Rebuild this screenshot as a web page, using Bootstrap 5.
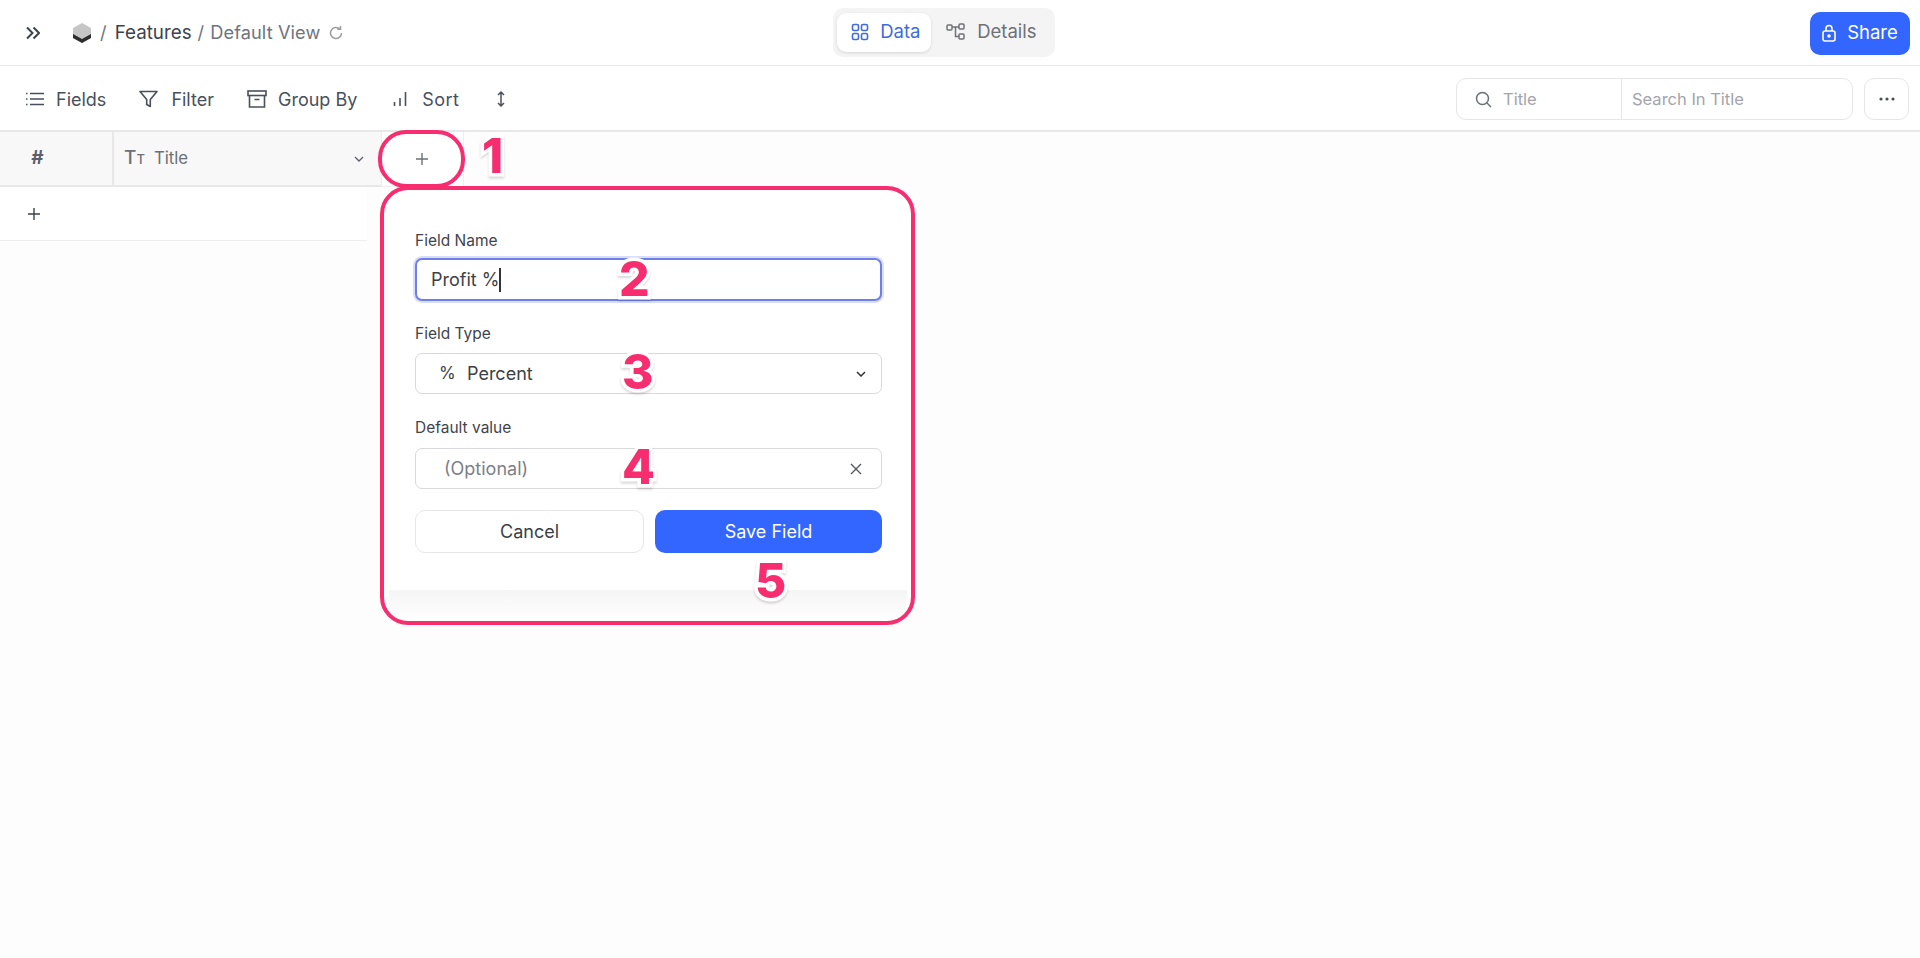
<!DOCTYPE html>
<html lang="en"><head><meta charset="utf-8"><title>Features</title>
<link href="https://cdn.jsdelivr.net/npm/bootstrap@5.3.0/dist/css/bootstrap.min.css" rel="stylesheet">
<style>
html,body{height:100%}
body{font-family:Inter,"Liberation Sans",sans-serif;background:#fdfdfd;color:#4a4f5c;overflow:hidden;height:958px}
svg{display:block;flex:none}
.topbar{height:66px;background:#fff;border-bottom:1px solid #e8e8e8;padding:1px 10px 0 26px}
.crumbs{font-size:18.2px;margin-left:32px}
.crumb-dark{color:#3d424d;font-weight:400;font-size:18.8px;margin:0 6px 0 8px}
.crumb-muted{color:#6e7480;letter-spacing:.1px}
.crumb-tail{margin-left:6px}
.switcher{background:#f4f4f5;border-radius:10px;padding:5px 4px;gap:2px;height:49px;margin-bottom:2px}
.sw-item{height:39px;display:flex;align-items:center;gap:11px;font-size:18.5px;color:#6f7177;border-radius:9px;width:94px;padding-left:14px}
.sw-on{background:#fff;color:#3f6bdc;box-shadow:0 1px 3px rgba(0,0,0,.12)}
.sw-off{width:118px;padding-left:13px}
.center-slot{flex:1;margin-right:266px}
.share{background:#3366ff;color:#fff;font-size:18.5px;height:43px;width:100px;border-radius:10px;gap:11px;border:0}
.toolbar{height:66px;background:#fff;border-bottom:2px solid #e8e8e8;padding:2px 11px 0 26px}
.tool{font-size:18px;color:#4a4f5c;font-weight:400}
.tools{gap:33px}
.tg12{gap:12px}.tg11{gap:11px}.tg13{gap:13px}.tg15{gap:15px;margin-left:3px;letter-spacing:.4px}
.searchbox{height:42px;width:397px;border:1px solid #e6e6e6;border-radius:10px;background:#fff;font-size:16.5px}
.search-l{width:165px;height:100%;border-right:1px solid #e6e6e6;padding-left:18px;gap:11px;color:#a2a5ab}
.search-r{padding-left:10px;color:#a2a5ab}
.morebtn{width:45px;height:42px;border:1px solid #e6e6e6;border-radius:10px;background:#fff}
.headrow{display:flex;height:55px}
.hcell{background:#f8f8f8;height:100%;display:flex;align-items:center;border-bottom:2px solid #e8e8e8}
.h-num{width:114px;border-right:2px solid #e8e8e8;justify-content:center;padding-right:37px;font-size:19px;font-weight:700;color:#5b5e6b}
.h-title{width:267px;padding:0 17px 0 10px;font-size:16.8px;color:#6c7078;gap:9px}
.tt-big{font-size:19px;font-weight:500}
.tt-small{font-size:13px}
.h-add{width:83px;justify-content:center;background:#fff;border-right:1px solid #eee;border-left:1px solid #eee;border-bottom:1px solid #eee;padding-right:2px}
.addrow{height:54px;width:367px;background:#fff;border-bottom:1px solid #eee;padding-left:27px}
.stage{position:relative;flex:1}
.popover-card{position:absolute;left:381px;top:0;width:534px;height:438px;background:#fff;border-radius:26px;padding:44px 33px 0 34px;overflow:hidden}
.flabel{font-size:15.5px;line-height:20px;color:#3f434c;display:block;font-weight:400}
.finput{border:1px solid #d9d9dc;border-radius:7px;font-size:18px;color:#3c3f46;padding:0 15px;background:#fff;display:flex;align-items:center}
.f-focus{height:43px;margin-top:7px;padding:0 14px;border:2px solid #6f7fe8;box-shadow:0 0 0 2px #d9deff}
.f-type{height:41px;margin-top:9px}
.f-opt{height:41px;margin-top:10px;color:#7d8088;padding-left:28px}
.lab2{margin-top:23px}.lab3{margin-top:24px}
.caret{width:2px;height:24px;background:#333;display:inline-block}
.pct{width:28px;margin-left:8px;font-size:17px}
.btnrow{gap:11px;margin-top:21px}
.pb{height:43px;flex:1;border-radius:10px;font-size:18px;font-weight:400}
.pb-c{background:#fff;border:1px solid #e6e6e6;color:#3c3f46}
.pb-s{background:#3366ff;border:0;color:#fff}
.cardfoot{position:absolute;left:8px;right:8px;bottom:4px;height:31px;background:linear-gradient(#f5f5f5,#fff)}
.ring{position:absolute;border:4px solid #f72d70;pointer-events:none}
.ring-a{left:378px;top:-57px;width:87px;height:58px;border-radius:28px}
.ring-b{left:380px;top:-1px;width:535px;height:439px;border-radius:28px}
.tagnum{position:absolute;color:#f72d70;font-family:Inter,"Liberation Sans",sans-serif;font-weight:800;font-size:48px;line-height:1;-webkit-text-stroke:7px #fff;paint-order:stroke fill;filter:drop-shadow(0 2px 1px rgba(0,0,0,.15))}
</style></head>
<body class="d-flex flex-column">
<div class="topbar d-flex align-items-center">
  <svg width="14" height="14" viewBox="0 0 14 14" fill="none" stroke="#3d424d" stroke-width="2"><path d="M1 1.5l5.5 5.5L1 12.5M7.5 1.5L13 7l-5.5 5.5"/></svg>
  <div class="crumbs d-flex align-items-center">
    <svg width="20" height="22" viewBox="0 0 20 22"><path d="M10 1l9 5v10l-9 5-9-5V6z" fill="#c6c6c6"/><path d="M1 12l9 5 9-5v4l-9 5-9-5z" fill="#2e2e2e"/></svg>
    <span class="crumb-muted ms-2">/</span><span class="crumb-dark">Features</span><span class="crumb-muted">/</span><span class="crumb-muted crumb-tail">Default View</span>
    <svg class="ms-2" width="16" height="16" viewBox="0 0 16 16" fill="none" stroke="#9a9da3" stroke-width="1.5"><path d="M13.5 8a5.5 5.5 0 1 1-1.7-4M12.5 1v3.2H9.3"/></svg>
  </div>
  <div class="center-slot d-flex justify-content-center">
    <div class="switcher d-flex">
      <div class="sw-item sw-on"><svg width="18" height="18" viewBox="0 0 18 18" fill="none" stroke="#3f6bdc" stroke-width="1.6"><rect x="1.5" y="1.5" width="6" height="6" rx="1.5"/><rect x="10.5" y="1.5" width="6" height="6" rx="1.5"/><rect x="1.5" y="10.5" width="6" height="6" rx="1.5"/><rect x="10.5" y="10.5" width="6" height="6" rx="1.5"/></svg>Data</div>
      <div class="sw-item sw-off"><svg width="20" height="18" viewBox="0 0 20 18" fill="none" stroke="#6f7177" stroke-width="1.5"><rect x="1" y="2" width="5" height="5" rx="1"/><rect x="13" y="1" width="5" height="5" rx="1"/><rect x="13" y="11" width="5" height="5" rx="1"/><path d="M6 4h7M9.5 4v9.5H13"/></svg>Details</div>
    </div>
  </div>
  <button class="btn share d-flex align-items-center justify-content-center p-0"><svg width="14" height="18" viewBox="0 0 14 18" fill="none" stroke="#fff" stroke-width="1.6"><rect x="1" y="7" width="12" height="10" rx="2"/><path d="M4 7V4.5a3 3 0 0 1 6 0V7"/><circle cx="7" cy="12" r="1" fill="#fff"/></svg>Share</button>
</div>
<div class="toolbar d-flex align-items-center justify-content-between">
  <div class="tools d-flex align-items-center">
    <div class="tool tg12 d-flex align-items-center"><svg width="18" height="14" viewBox="0 0 18 14" fill="none" stroke="#4a4f5c" stroke-width="1.4"><path d="M4 1.5h14M4 7h14M4 12.5h14M0 1.5h1.5M0 7h1.5M0 12.5h1.5"/></svg>Fields</div>
    <div class="tool tg13 d-flex align-items-center"><svg width="19" height="20" viewBox="0 0 19 20" fill="none" stroke="#4a4f5c" stroke-width="1.6"><path d="M1 2.5h17l-6.7 8v7l-3.6-2v-5z" stroke-linejoin="round"/></svg>Filter</div>
    <div class="tool tg11 d-flex align-items-center"><svg width="20" height="20" viewBox="0 0 20 20" fill="none" stroke="#4a4f5c" stroke-width="1.6"><rect x="1" y="2" width="18" height="4.5"/><path d="M2.5 6.5V18h15V6.5M7.5 10.5h5"/></svg>Group By</div>
    <div class="tool tg15 d-flex align-items-center"><svg width="14" height="18" viewBox="0 0 14 18" fill="none" stroke="#4a4f5c" stroke-width="1.6"><path d="M1.5 16v-4M7 16V8M12.5 16V2"/></svg>Sort</div>
    <svg class="ms-1" width="10" height="18" viewBox="0 0 10 18" fill="none" stroke="#4a4f5c" stroke-width="1.5"><path d="M5 2v14M2 5l3-3 3 3M2 13l3 3 3-3"/></svg>
  </div>
  <div class="d-flex align-items-center" style="gap:11px">
    <div class="searchbox d-flex align-items-center">
      <div class="search-l d-flex align-items-center"><svg width="17" height="17" viewBox="0 0 17 17" fill="none" stroke="#6b6e75" stroke-width="1.5"><circle cx="7.5" cy="7.5" r="6"/><path d="M12 12l4 4"/></svg>Title</div>
      <div class="search-r">Search In Title</div>
    </div>
    <div class="morebtn d-flex align-items-center justify-content-center"><svg width="16" height="4" viewBox="0 0 16 4" fill="#4a4f5c"><circle cx="2" cy="2" r="1.6"/><circle cx="8" cy="2" r="1.6"/><circle cx="14" cy="2" r="1.6"/></svg></div>
  </div>
</div>
<div class="headrow">
  <div class="hcell h-num">#</div>
  <div class="hcell h-title"><span class="tt-big">T<span class="tt-small">T</span></span><span class="flex-grow-1">Title</span><svg width="10" height="6" viewBox="0 0 10 6" fill="none" stroke="#5c6068" stroke-width="1.3"><path d="M1 1l4 4 4-4"/></svg></div>
  <div class="hcell h-add"><svg width="14" height="14" viewBox="0 0 14 14" stroke="#6c7078" stroke-width="1.4"><path d="M7 1v12M1 7h12"/></svg></div>
</div>
<div class="stage">
  <div class="addrow d-flex align-items-center"><svg width="14" height="14" viewBox="0 0 14 14" stroke="#3d424d" stroke-width="1.4"><path d="M7 1v12M1 7h12"/></svg></div>
  <div class="popover-card">
    <label class="flabel">Field Name</label>
    <div class="finput f-focus">Profit %<span class="caret"></span></div>
    <label class="flabel lab2">Field Type</label>
    <div class="finput f-type"><span class="pct">%</span><span class="flex-grow-1">Percent</span><svg width="10" height="6" viewBox="0 0 10 6" fill="none" stroke="#333" stroke-width="1.5"><path d="M1 1l4 4 4-4"/></svg></div>
    <label class="flabel lab3">Default value</label>
    <div class="finput f-opt"><span class="flex-grow-1">(Optional)</span><svg class="me-1" width="12" height="12" viewBox="0 0 12 12" stroke="#55585f" stroke-width="1.4"><path d="M1 1l10 10M11 1L1 11"/></svg></div>
    <div class="btnrow d-flex"><button class="pb pb-c">Cancel</button><button class="pb pb-s">Save Field</button></div>
    <div class="cardfoot"></div>
  </div>
  <div class="ring ring-a"></div>
  <div class="ring ring-b"></div>
  <div class="tagnum" style="left:482px;top:-55px">1</div>
  <div class="tagnum" style="left:619px;top:68px">2</div>
  <div class="tagnum" style="left:622px;top:161px">3</div>
  <div class="tagnum" style="left:622px;top:256px">4</div>
  <div class="tagnum" style="left:755px;top:370px">5</div>
</div>
<script src="https://cdn.jsdelivr.net/npm/bootstrap@5.3.0/dist/js/bootstrap.bundle.min.js"></script>
</body></html>
